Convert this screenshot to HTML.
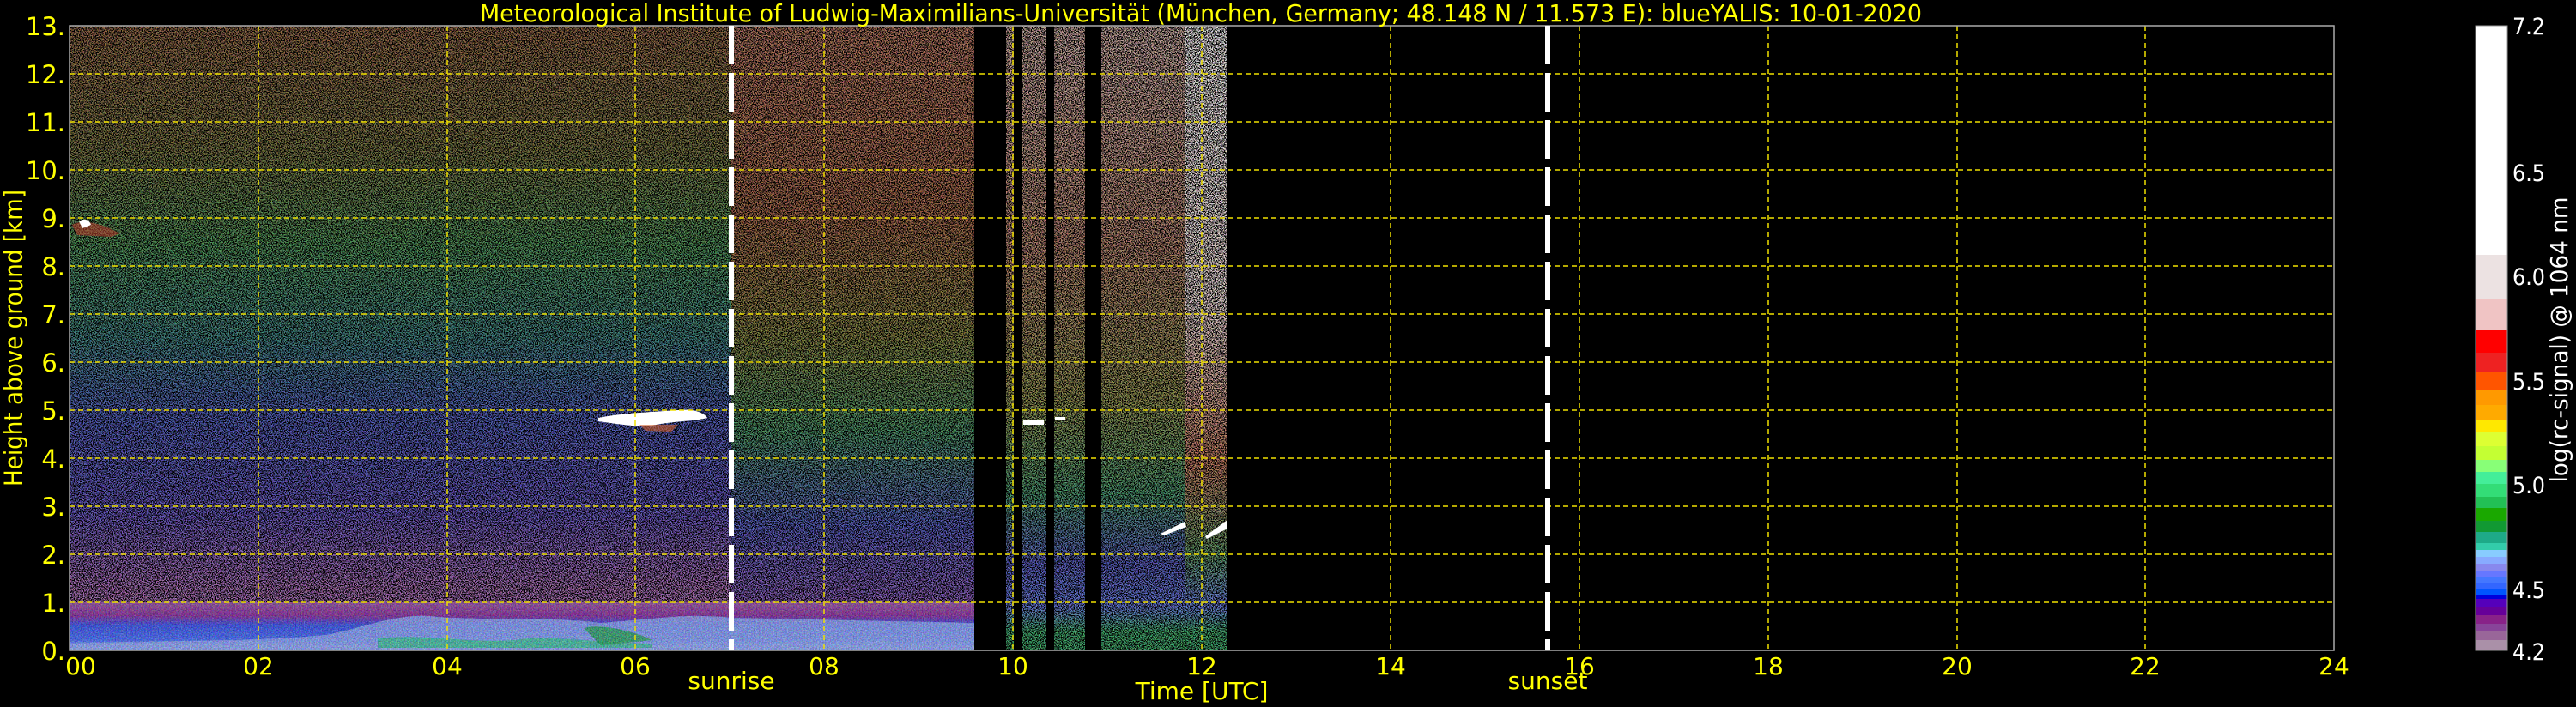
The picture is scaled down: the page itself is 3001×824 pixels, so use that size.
<!DOCTYPE html>
<html><head><meta charset="utf-8"><style>
html,body{margin:0;padding:0;background:#000;width:3001px;height:824px;overflow:hidden}
svg{display:block}
text{font-family:"DejaVu Sans","Liberation Sans",sans-serif}
</style></head><body>
<svg width="3001" height="824" viewBox="0 0 3001 824" xmlns="http://www.w3.org/2000/svg">
<defs>
<filter id="sp" x="0" y="0" width="1" height="1" color-interpolation-filters="sRGB">
<feTurbulence type="fractalNoise" baseFrequency="0.8" numOctaves="1" seed="7" result="t"/>
<feColorMatrix in="t" type="matrix" values="0 0 0 0 0  0 0 0 0 0  0 0 0 0 0  10 0 0 0 -4.6" result="m"/>
<feFlood flood-color="#000" result="bk"/>
<feComposite in="bk" in2="m" operator="in" result="d0"/>
<feComposite in="d0" in2="SourceAlpha" operator="in" result="dots"/>
<feTurbulence type="fractalNoise" baseFrequency="0.9" numOctaves="1" seed="21" result="t2"/>
<feColorMatrix in="t2" type="matrix" values="4 0 0 0 -1.5  0 4 0 0 -1.5  0 0 4 0 -1.5  0 0 0 0 0.22" result="c0"/>
<feComposite in="c0" in2="SourceAlpha" operator="in" result="col"/>
<feMerge><feMergeNode in="SourceGraphic"/><feMergeNode in="col"/><feMergeNode in="dots"/></feMerge>
</filter>
<filter id="sl" x="0" y="0" width="1" height="1" color-interpolation-filters="sRGB">
<feTurbulence type="fractalNoise" baseFrequency="0.7" numOctaves="1" seed="3" result="t"/>
<feColorMatrix in="t" type="matrix" values="3 0 0 0 -1  0 3 0 0 -1  0 0 3 0 -1  0 0 0 0 0.25" result="c0"/>
<feComposite in="c0" in2="SourceAlpha" operator="in" result="col"/>
<feMerge><feMergeNode in="SourceGraphic"/><feMergeNode in="col"/></feMerge>
</filter>
<linearGradient id="gn" x1="0" y1="30" x2="0" y2="758" gradientUnits="userSpaceOnUse">
<stop offset="0" stop-color="#8a5a34"/>
<stop offset="0.2" stop-color="#6e6a30"/>
<stop offset="0.35" stop-color="#3f8a48"/>
<stop offset="0.5" stop-color="#2f7a78"/>
<stop offset="0.62" stop-color="#4050b8"/>
<stop offset="0.78" stop-color="#5a48c0"/>
<stop offset="0.9" stop-color="#a060b0"/>
<stop offset="1" stop-color="#a060b0"/>
</linearGradient>
<linearGradient id="gd" x1="0" y1="30" x2="0" y2="758" gradientUnits="userSpaceOnUse">
<stop offset="0" stop-color="#b06a50"/>
<stop offset="0.3" stop-color="#a05a38"/>
<stop offset="0.5" stop-color="#7a7a30"/>
<stop offset="0.65" stop-color="#3a8a58"/>
<stop offset="0.8" stop-color="#4850c0"/>
<stop offset="0.92" stop-color="#8050b8"/>
<stop offset="1" stop-color="#8050b8"/>
</linearGradient>
<linearGradient id="gw" x1="0" y1="30" x2="0" y2="758" gradientUnits="userSpaceOnUse">
<stop offset="0" stop-color="#c8a49a"/>
<stop offset="0.35" stop-color="#b07860"/>
<stop offset="0.6" stop-color="#8a8a40"/>
<stop offset="0.75" stop-color="#3a9060"/>
<stop offset="0.86" stop-color="#4a50c0"/>
<stop offset="0.93" stop-color="#5a70e0"/>
<stop offset="0.97" stop-color="#30a860"/>
<stop offset="1" stop-color="#30a860"/>
</linearGradient>
<linearGradient id="gx" x1="0" y1="30" x2="0" y2="758" gradientUnits="userSpaceOnUse">
<stop offset="0" stop-color="#f4f0f0"/>
<stop offset="0.45" stop-color="#e8d4d0"/>
<stop offset="0.7" stop-color="#c07050"/>
<stop offset="0.85" stop-color="#50905a"/>
<stop offset="0.93" stop-color="#5a70e0"/>
<stop offset="0.97" stop-color="#30a860"/>
<stop offset="1" stop-color="#30a860"/>
</linearGradient>
<linearGradient id="bl" x1="0" y1="700" x2="0" y2="758" gradientUnits="userSpaceOnUse">
<stop offset="0" stop-color="#8a4a98"/>
<stop offset="0.3" stop-color="#7a2090"/>
<stop offset="0.5" stop-color="#2a44e0"/>
<stop offset="0.8" stop-color="#3a60f0"/>
<stop offset="0.9" stop-color="#88a0f4"/>
<stop offset="1" stop-color="#98acf8"/>
</linearGradient>
</defs>

<g filter="url(#sp)">
<rect x="81" y="30" width="771" height="728" fill="url(#gn)"/>
<rect x="852" y="30" width="283" height="728" fill="url(#gd)"/>
<rect x="1172" y="30" width="9" height="728" fill="url(#gw)"/>
<rect x="1191" y="30" width="27" height="728" fill="url(#gw)"/>
<rect x="1228" y="30" width="36" height="728" fill="url(#gw)"/>
<rect x="1283" y="30" width="97" height="728" fill="url(#gw)"/>
<rect x="1380" y="30" width="50" height="728" fill="url(#gx)"/>
</g>
<g filter="url(#sl)">
<rect x="81" y="702" width="1054" height="56" fill="url(#bl)"/>
<path d="M81 750 C200 746 300 748 380 740 C430 730 460 716 500 718 C560 724 640 718 700 726 C760 722 800 714 852 720 L1135 726 L1135 758 L81 758 Z" fill="#849cf0" opacity="0.85"/>
<path d="M440 744 C500 738 540 750 600 746 C640 740 680 748 760 750 L760 755 L440 755 Z" fill="#30b890" opacity="0.85"/>
<path d="M680 732 C700 726 740 736 760 746 L700 752 Z" fill="#1a9a50" opacity="0.85"/>
</g>

<path d="M697 487 C720 482 760 480 790 478 C805 476 820 480 824 487 C810 491 780 491 760 496 C740 498 720 494 697 491 Z" fill="#fff"/>
<path d="M745 495 L790 495 L782 503 L752 502 Z" fill="#d06030" opacity="0.6"/>
<path d="M84 262 C95 256 110 259 125 265 L140 272 L130 276 L90 274 Z" fill="#c04030" opacity="0.55"/>
<path d="M92 258 C98 254 104 256 106 262 L96 266 Z" fill="#fff"/>
<rect x="1192" y="489" width="24" height="6" fill="#fff"/>
<rect x="1229" y="486" width="12" height="4" fill="#fff"/>
<path d="M1352 622 L1380 608 L1382 614 L1356 624 Z" fill="#fff"/>
<path d="M1404 625 L1430 606 L1430 616 L1406 628 Z" fill="#fff"/>

<g stroke="#f0e000" stroke-width="1.5" stroke-dasharray="6 4" fill="none">
<path d="M81 702H2719M81 646H2719M81 590H2719M81 534H2719M81 478H2719M81 422H2719M81 366H2719M81 310H2719M81 254H2719M81 198H2719M81 142H2719M81 86H2719"/>
<path d="M301 30V758M521 30V758M740 30V758M960 30V758M1180 30V758M1400 30V758M1620 30V758M1840 30V758M2060 30V758M2280 30V758M2499 30V758"/>
</g>
<rect x="81" y="30" width="2638" height="728" fill="none" stroke="#aaa" stroke-width="1.5"/>
<g stroke="#fff" stroke-width="6" stroke-dasharray="45 10">
<path d="M852 30V758M1803 30V758"/>
</g>

<text x="1399" y="25" fill="#ffff00" font-size="28" text-anchor="middle" textLength="1680" lengthAdjust="spacingAndGlyphs">Meteorological Institute of Ludwig-Maximilians-Universität (München, Germany; 48.148 N / 11.573 E):    blueYALIS: 10-01-2020</text>

<g fill="#ffff00" font-size="29" text-anchor="end">
<text x="76" y="769">0.</text><text x="76" y="713">1.</text><text x="76" y="657">2.</text><text x="76" y="601">3.</text><text x="76" y="545">4.</text><text x="76" y="489">5.</text><text x="76" y="433">6.</text><text x="76" y="377">7.</text><text x="76" y="321">8.</text><text x="76" y="265">9.</text><text x="76" y="209">10.</text><text x="76" y="153">11.</text><text x="76" y="97">12.</text><text x="76" y="41">13.</text>
</g>
<text transform="translate(26 394) rotate(-90)" fill="#ffff00" font-size="29" text-anchor="middle" textLength="346" lengthAdjust="spacingAndGlyphs">Height above ground [km]</text>

<g fill="#ffff00" font-size="28" text-anchor="middle">
<text x="94" y="786">00</text><text x="301" y="786">02</text><text x="521" y="786">04</text><text x="740" y="786">06</text><text x="960" y="786">08</text><text x="1180" y="786">10</text><text x="1400" y="786">12</text><text x="1620" y="786">14</text><text x="1840" y="786">16</text><text x="2060" y="786">18</text><text x="2280" y="786">20</text><text x="2499" y="786">22</text><text x="2719" y="786">24</text>
<text x="852" y="803">sunrise</text><text x="1803" y="803">sunset</text>
<text x="1400" y="815">Time [UTC]</text>
</g>

<g>
<rect x="2884" y="30" width="37" height="268" fill="#fff"/>
<rect x="2884" y="297" width="37" height="52" fill="#ece2e2"/>
<rect x="2884" y="348" width="37" height="38" fill="#f0c4c4"/>
<rect x="2884" y="385" width="37" height="27" fill="#ff0000"/>
<rect x="2884" y="411" width="37" height="24" fill="#ee2222"/>
<rect x="2884" y="434" width="37" height="21" fill="#ff5500"/>
<rect x="2884" y="454" width="37" height="19" fill="#ff9900"/>
<rect x="2884" y="472" width="37" height="18" fill="#ffaa00"/>
<rect x="2884" y="489" width="37" height="16" fill="#ffe800"/>
<rect x="2884" y="504" width="37" height="17" fill="#ddff33"/>
<rect x="2884" y="520" width="37" height="17" fill="#c4ff33"/>
<rect x="2884" y="536" width="37" height="15" fill="#88ff77"/>
<rect x="2884" y="550" width="37" height="15" fill="#44ee99"/>
<rect x="2884" y="564" width="37" height="16" fill="#33dd77"/>
<rect x="2884" y="579" width="37" height="14" fill="#22c055"/>
<rect x="2884" y="592" width="37" height="16" fill="#1aa800"/>
<rect x="2884" y="607" width="37" height="14" fill="#119933"/>
<rect x="2884" y="620" width="37" height="14" fill="#1eaa88"/>
<rect x="2884" y="633" width="37" height="9" fill="#33ccaa"/>
<rect x="2884" y="641" width="37" height="9" fill="#88ccff"/>
<rect x="2884" y="649" width="37" height="9" fill="#88aaff"/>
<rect x="2884" y="657" width="37" height="9" fill="#8888ee"/>
<rect x="2884" y="665" width="37" height="9" fill="#6677ff"/>
<rect x="2884" y="673" width="37" height="8" fill="#4477ff"/>
<rect x="2884" y="680" width="37" height="7" fill="#3366ff"/>
<rect x="2884" y="686" width="37" height="9" fill="#0055ff"/>
<rect x="2884" y="694" width="37" height="5" fill="#0000dd"/>
<rect x="2884" y="698" width="37" height="10" fill="#5500bb"/>
<rect x="2884" y="707" width="37" height="11" fill="#660099"/>
<rect x="2884" y="717" width="37" height="11" fill="#882288"/>
<rect x="2884" y="727" width="37" height="10" fill="#884499"/>
<rect x="2884" y="736" width="37" height="11" fill="#996699"/>
<rect x="2884" y="746" width="37" height="12" fill="#aa90a8"/>
<rect x="2884" y="30" width="37" height="728" fill="none" stroke="#999" stroke-width="1"/>
</g>
<g fill="#fff" font-size="27">
<text x="2927" y="40" textLength="38" lengthAdjust="spacingAndGlyphs">7.2</text><text x="2927" y="211" textLength="38" lengthAdjust="spacingAndGlyphs">6.5</text><text x="2927" y="332" textLength="38" lengthAdjust="spacingAndGlyphs">6.0</text><text x="2927" y="454" textLength="38" lengthAdjust="spacingAndGlyphs">5.5</text><text x="2927" y="575" textLength="38" lengthAdjust="spacingAndGlyphs">5.0</text><text x="2927" y="697" textLength="38" lengthAdjust="spacingAndGlyphs">4.5</text><text x="2927" y="769" textLength="38" lengthAdjust="spacingAndGlyphs">4.2</text>
</g>
<text transform="translate(2991 396) rotate(-90)" fill="#fff" font-size="28" text-anchor="middle" textLength="333" lengthAdjust="spacingAndGlyphs">log(rc-signal) @ 1064 nm</text>
</svg>
</body></html>
